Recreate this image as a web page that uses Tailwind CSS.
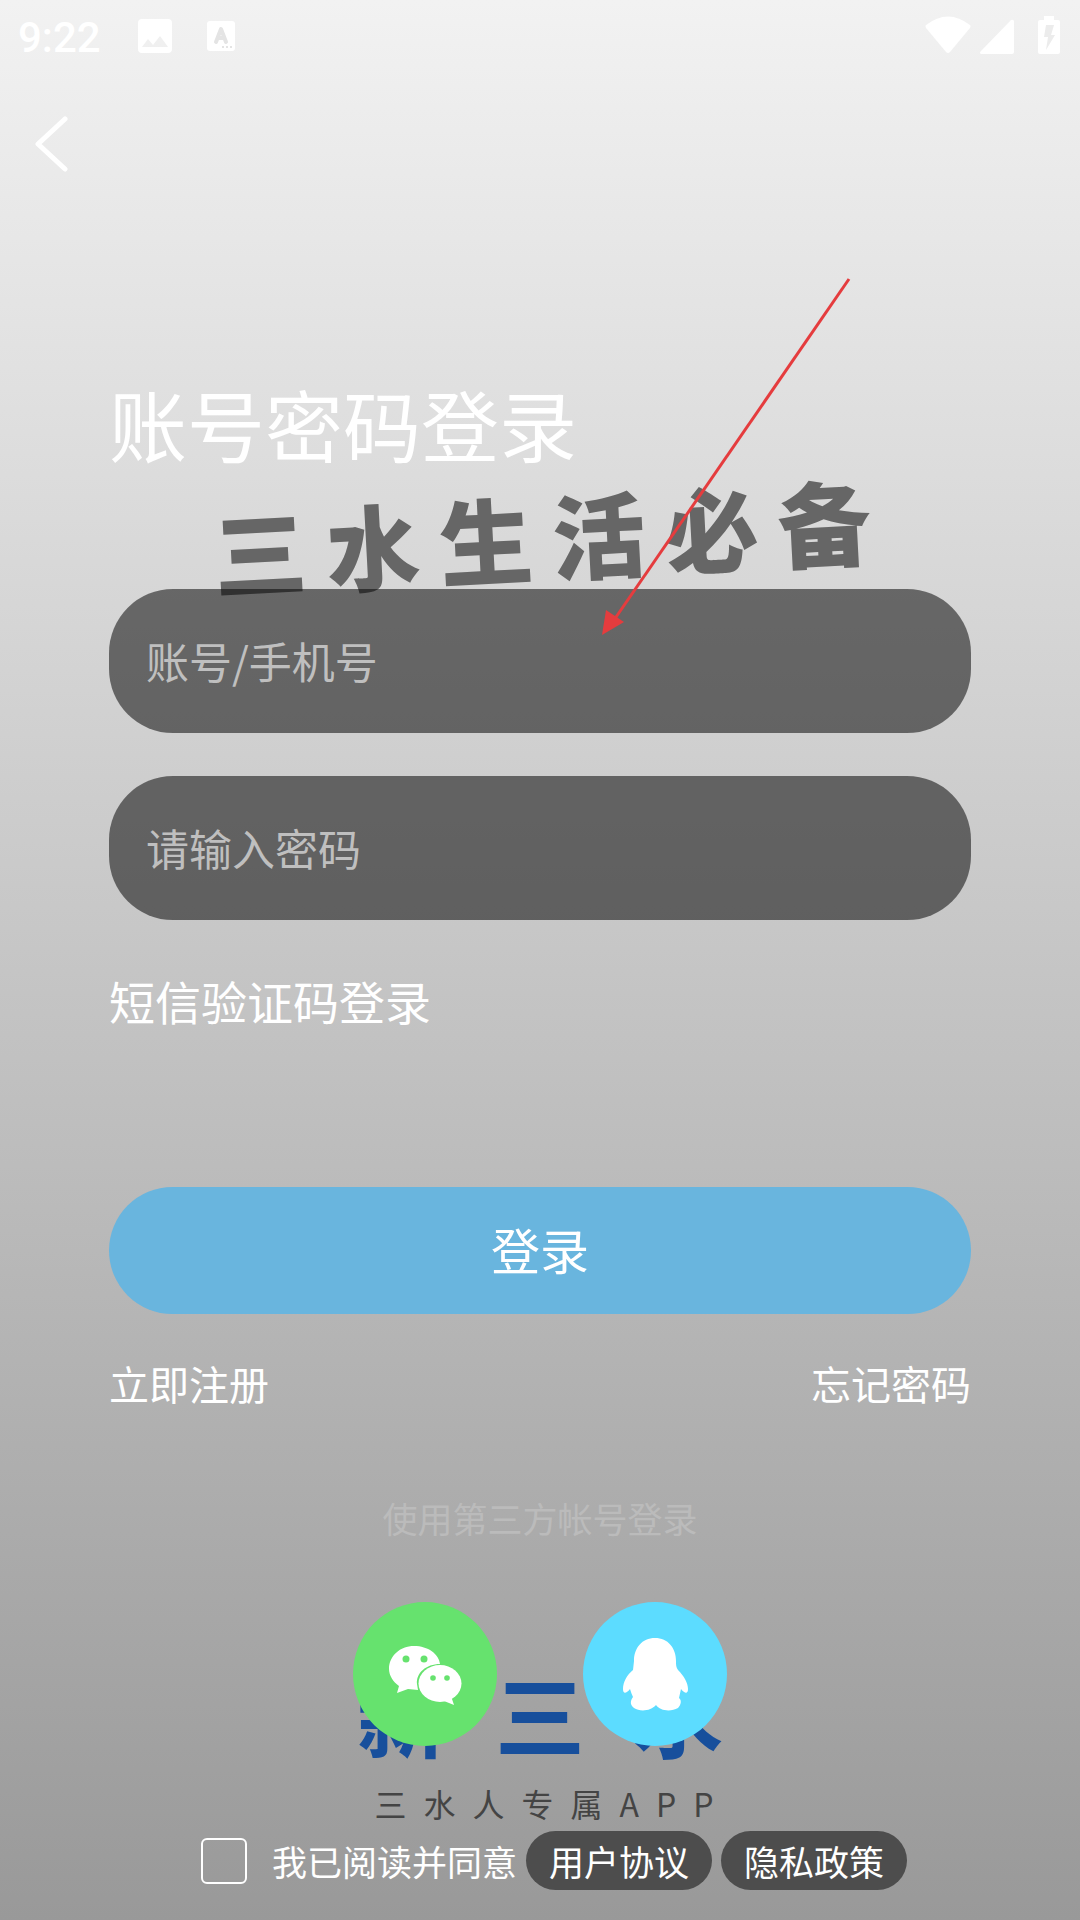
<!DOCTYPE html>
<html lang="zh-CN">
<head>
    <meta charset="UTF-8">
    <meta name="viewport" content="width=device-width, initial-scale=1.0">
    <title>账号密码登录</title>
    <script src="https://cdn.jsdelivr.net/npm/@tailwindcss/browser@4"></script>
</head>
<body class="relative flex flex-col min-h-screen overflow-x-hidden bg-linear-to-b/srgb from-[#f2f2f2] to-[#999999] text-white font-['Noto_Sans_CJK_SC',sans-serif]">
    <!-- splash artwork behind the form -->
    <div class="absolute inset-x-0 top-[487px] flex justify-center gap-5 pl-1 -rotate-3 text-[93px] leading-24 font-black text-[#666666]" aria-hidden="true">
        <span>三</span><span>水</span><span>生</span><span>活</span><span>必</span><span>备</span>
    </div>
    <div class="absolute inset-x-0 top-[1652px] flex justify-center gap-12 text-[90px] leading-[120px] font-bold text-[#174f9c]" aria-hidden="true">
        <span>新</span><span>三</span><span>水</span>
    </div>
    <div class="absolute inset-x-0 top-[1779px] flex justify-center gap-[17px] pl-2 text-[32px] leading-[48px] text-[#444444]" aria-hidden="true">
        <span>三</span><span>水</span><span>人</span><span>专</span><span>属</span><span>A</span><span>P</span><span>P</span>
    </div>

    <header class="relative">
        <div class="flex items-center h-18 pl-[18px] pr-5">
            <span class="pt-1 font-[Roboto] font-medium text-[42px] leading-[48px]">9:22</span>
            <svg class="ml-9 w-9 h-9" viewBox="0 0 36 36" fill="#fff">
                <path fill-rule="evenodd" d="M5 1h26a4 4 0 0 1 4 4v26a4 4 0 0 1-4 4H5a4 4 0 0 1-4-4V5a4 4 0 0 1 4-4zM5 29h26l-8-11-7 9-5-6z"/>
            </svg>
            <svg class="ml-8 w-8 h-8" viewBox="0 0 32 32">
                <rect x="2" y="1" width="28" height="30" rx="3" fill="#fff"/>
                <path d="M11 22l5-13 5 13M13 18h6" fill="none" stroke="#e4e4e4" stroke-width="4" stroke-linecap="round" stroke-linejoin="round"/>
                <path d="M17 27h2m2 0h2m2 0h2" stroke="#e4e4e4" stroke-width="2"/>
            </svg>
            <svg class="ml-auto w-[46px] h-10" viewBox="0 0 46 40" fill="#fff">
                <path d="M1 9q22-17 44 0q1 1 0 3L25 36q-2 2-4 0L1 12q-1-2 0-3z"/>
            </svg>
            <svg class="ml-2 w-[35px] h-10" viewBox="0 0 35 40" fill="#fff">
                <path d="M2 38q-2-1 0-3L32 4q2-1 3 1v31q0 2-2 2z"/>
            </svg>
            <svg class="ml-6 w-[22px] h-10" viewBox="0 0 22 40">
                <path fill="#fff" d="M6 0h10v4h4q2 0 2 2v30q0 2-2 2H2q-2 0-2-2V6q0-2 2-2h4z"/>
                <path fill="#ececec" d="M8 9h8l-3 10h4L8 34l2-13H6z"/>
            </svg>
        </div>
        <button type="button" aria-label="返回" class="mt-10 ml-8 block">
            <svg class="w-9 h-16" viewBox="0 0 36 64" fill="none" stroke="#fff" stroke-width="5" stroke-linecap="round" stroke-linejoin="round">
                <path d="M33 7L6 32l27 25"/>
            </svg>
        </button>
    </header>

    <main class="relative flex flex-col px-[109px] pt-[205px]">
        <h1 class="text-[78px] leading-[84px]">账号密码登录</h1>
        <form class="mt-[124px] flex flex-col">
            <input type="text" aria-label="账号/手机号" placeholder="账号/手机号" class="w-full h-36 px-[37px] pb-[3px] rounded-[64px] bg-black/52 text-[43px] placeholder:text-[#bfbfbf] outline-none">
            <input type="password" aria-label="请输入密码" placeholder="请输入密码" class="mt-[43px] w-full h-36 px-[37px] pb-[3px] rounded-[64px] bg-black/52 text-[43px] placeholder:text-[#bfbfbf] outline-none">
            <a href="#" class="mt-12 self-start text-[46px] leading-16">短信验证码登录</a>
            <button type="submit" class="mt-[155px] h-[127px] pb-[3px] rounded-[64px] bg-[#69b5de] text-[49px]">登录</button>
        </form>
        <div class="mt-[39px] flex justify-between text-[40px] leading-[60px]">
            <a href="#">立即注册</a>
            <a href="#">忘记密码</a>
        </div>
        <p class="mt-[79px] text-center text-[35px] leading-[52px] text-[#bbbbbb]">使用第三方帐号登录</p>
        <div class="mt-[58px] flex justify-center gap-[86px]">
            <button type="button" aria-label="微信登录" class="w-36 h-36 rounded-full bg-[#66e26e]">
                <svg viewBox="0 0 144 144" fill="#fff">
                    <path d="M61 44c14 0 25 8 26 18-14 0-24 9-23 20l1 6-10-1-11 4 2-7c-6-4-10-11-10-17 0-13 11-23 25-23z"/>
                    <ellipse cx="87" cy="81.500" rx="21.500" ry="18.500"/>
                    <path d="M91 99l10 4-3-9z"/>
                    <g fill="#66e26e"><circle cx="53" cy="57" r="3.500"/><circle cx="71" cy="57" r="3.500"/><circle cx="80" cy="76" r="2.800"/><circle cx="94" cy="76" r="2.800"/></g>
                </svg>
            </button>
            <button type="button" aria-label="QQ登录" class="w-36 h-36 rounded-full bg-[#5cdcff]">
                <svg viewBox="0 0 144 144" fill="#fff">
                    <path d="M72 36c13 0 21 10 21 23 0 4 0 6 2 9 6 6 10 13 10 19 0 5-3 5-7 0l-2 9c3 2 2 7-1 10-7 4-18 3-22-3-5 6-16 7-22 3-4-3-4-7-1-11-1-2-2-5-3-8-4 5-7 5-7 0 0-7 4-14 10-19l1-9c0-13 8-23 21-23z"/>
                </svg>
            </button>
        </div>
    </main>

    <footer class="relative mt-[85px] mb-7 flex items-center justify-center gap-[9px] pl-7 text-[35px] leading-[59px]">
        <input id="agree" type="checkbox" class="mr-4 w-[46px] h-[46px] appearance-none rounded-md border-2 border-white checked:bg-[#69b5de]">
        <label for="agree">我已阅读并同意</label>
        <a href="#" class="px-[23px] rounded-full bg-[#4d4d4d]">用户协议</a>
        <a href="#" class="px-[23px] rounded-full bg-[#4d4d4d]">隐私政策</a>
    </footer>

    <!-- pointer to the account field -->
    <svg class="absolute top-[270px] left-[600px] w-[254px] h-[370px] pointer-events-none" viewBox="0 0 254 370" aria-hidden="true">
        <path d="M249 9L14 350" stroke="#e53c3e" stroke-width="3"/>
        <path d="M2 365L6 340L24 352z" fill="#e53c3e"/>
    </svg>
</body>
</html>
